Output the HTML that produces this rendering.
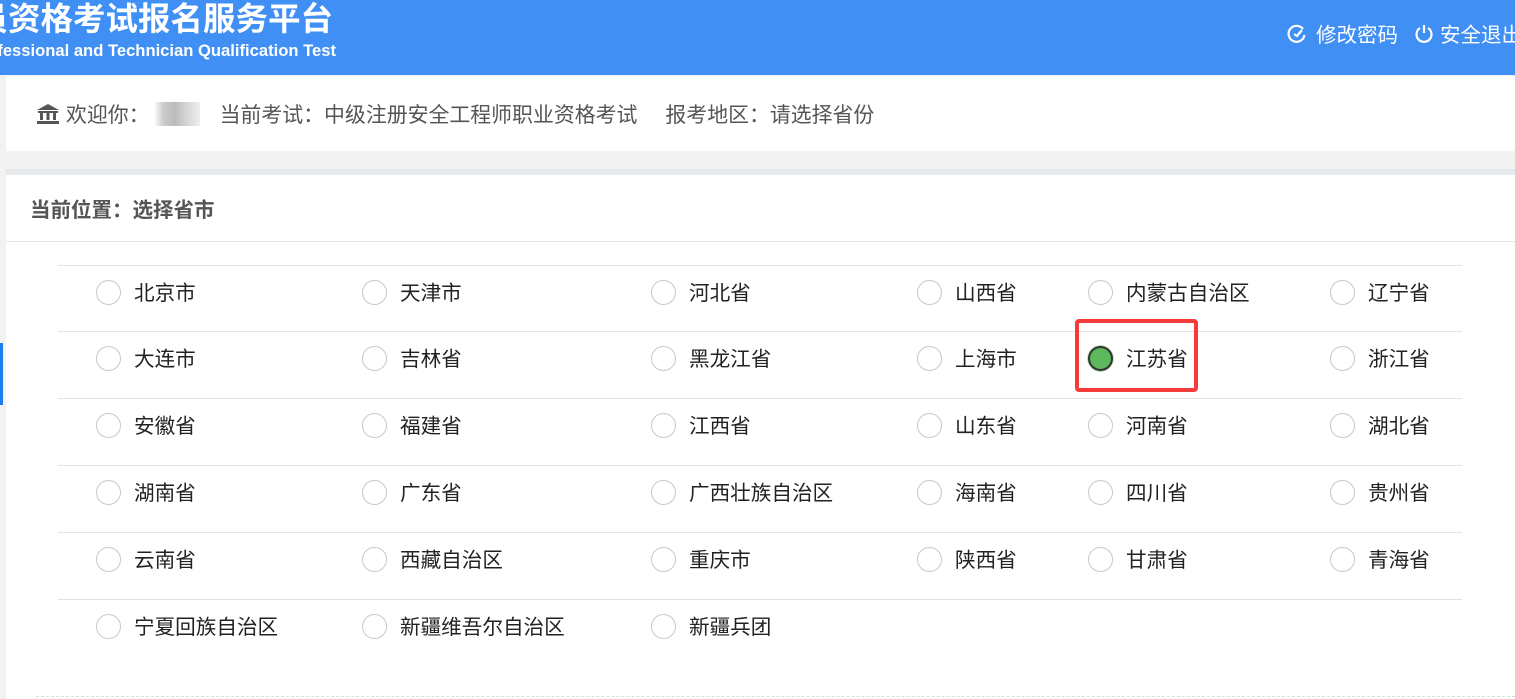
<!DOCTYPE html>
<html><head><meta charset="utf-8">
<style>
*{margin:0;padding:0;box-sizing:border-box}
body{width:1515px;height:699px;overflow:hidden;background:#f2f2f2;font-family:"Liberation Sans","Noto Sans CJK SC",sans-serif;position:relative}
.hdr{position:absolute;left:0;top:0;width:1515px;height:75px;background:#3f8ff5;color:#fff}
.t1{position:absolute;right:1182px;top:-7px;font-size:32.5px;font-weight:bold;white-space:nowrap}
.t2{position:absolute;right:1179px;top:41px;font-size:16.6px;font-weight:bold;white-space:nowrap}
.nav{position:absolute;left:1287px;top:18px;font-size:20.5px;white-space:nowrap;display:flex;align-items:center}
.nav svg{margin-right:9px}
.p1{position:absolute;left:6px;top:76px;width:1509px;height:75px;background:#fff}
.info{position:absolute;left:36px;top:99px;font-size:20.9px;color:#555;white-space:nowrap;display:flex;align-items:center}
.blur{display:inline-block;width:46px;height:24px;background:linear-gradient(90deg,#fff,#ccc 20%,#bbb 45%,#d5d5d5 70%,#eee);margin:0 20px 0 4px}
.band{position:absolute;left:6px;top:169px;width:1509px;height:6px;background:#e6e9ec}
.p2{position:absolute;left:6px;top:175px;width:1509px;height:524px;background:#fff}
.pos{position:absolute;left:30px;top:193px;font-size:20.5px;font-weight:bold;color:#555}
.l1{position:absolute;left:6px;top:241px;width:1509px;height:1px;background:#e6e6e6}
.row{position:absolute;left:58px;width:1404px;height:1px;background:#e3e3e3}
.r{position:absolute;width:25px;height:25px;border:1px solid #c8c8c8;border-radius:50%}
.lb{position:absolute;font-size:20.6px;color:#222;white-space:nowrap}
.sel{border:2px solid #333;background:#5cb85c;box-shadow:0 0 0 1px #bfe3bf}
.red{position:absolute;left:1075px;top:319px;width:123px;height:73px;border:4px solid #f53b3b;border-radius:4px}
.bar{position:absolute;left:0;top:343px;width:3px;height:62px;background:#1e7ef0}
.dash{position:absolute;left:36px;top:696px;width:1479px;border-top:1px dashed #ddd}
</style></head><body>
<div class="hdr">
<div class="t1">员资格考试报名服务平台</div>
<div class="t2">Professional and Technician Qualification Test</div>
<div class="nav">
<svg width="20" height="20" viewBox="0 0 20 20"><path d="M16 6A8 8 0 1 0 17.5 12" fill="none" stroke="#fff" stroke-width="2.2"/><path d="M7 11l3 2 5-6" fill="none" stroke="#fff" stroke-width="2.2"/></svg>修改密码
<svg width="20" height="20" viewBox="0 0 20 20" style="margin-left:16px;margin-right:6px"><path d="M6 5A7.5 7.5 0 1 0 14 5" fill="none" stroke="#fff" stroke-width="2.2"/><path d="M10 2v8" stroke="#fff" stroke-width="2.2"/></svg>安全退出
</div>
</div>
<div class="p1"></div>
<div class="info"><svg width="24" height="22" viewBox="0 0 24 22" style="margin-right:6px"><path d="M12 1L1 7h22z" fill="#555"/><rect x="2" y="8" width="20" height="2" fill="#555"/><rect x="4" y="10" width="3" height="7" fill="#555"/><rect x="10.5" y="10" width="3" height="7" fill="#555"/><rect x="17" y="10" width="3" height="7" fill="#555"/><rect x="1" y="18" width="22" height="3" fill="#555"/></svg>欢迎你：<span class="blur"></span>当前考试：中级注册安全工程师职业资格考试<span style="display:inline-block;width:28px"></span>报考地区：请选择省份</div>
<div class="band"></div>
<div class="p2"></div>
<div class="pos">当前位置：选择省市</div>
<div class="l1"></div>
<div class="bar"></div>
<div class="row" style="top:265px"></div>
<div class="row" style="top:331px"></div>
<div class="row" style="top:398px"></div>
<div class="row" style="top:465px"></div>
<div class="row" style="top:532px"></div>
<div class="row" style="top:599px"></div>
<div class="dash"></div>
<div id="g"></div>
<div class="red"></div>
<script>
var cols=[96,362,651,917,1088,1330];
var rows=[280,346,413,480,547,614];
var d=[["北京市","天津市","河北省","山西省","内蒙古自治区","辽宁省"],["大连市","吉林省","黑龙江省","上海市","江苏省","浙江省"],["安徽省","福建省","江西省","山东省","河南省","湖北省"],["湖南省","广东省","广西壮族自治区","海南省","四川省","贵州省"],["云南省","西藏自治区","重庆市","陕西省","甘肃省","青海省"],["宁夏回族自治区","新疆维吾尔自治区","新疆兵团"]];
var h="";
d.forEach(function(r,i){r.forEach(function(t,j){var s=(i==1&&j==4)?" sel":"";h+='<div class="r'+s+'" style="left:'+cols[j]+'px;top:'+rows[i]+'px"></div><div class="lb" style="left:'+(cols[j]+38)+'px;top:'+(rows[i]-4)+'px">'+t+'</div>';});});
document.getElementById("g").innerHTML=h;
</script>
</body></html>
